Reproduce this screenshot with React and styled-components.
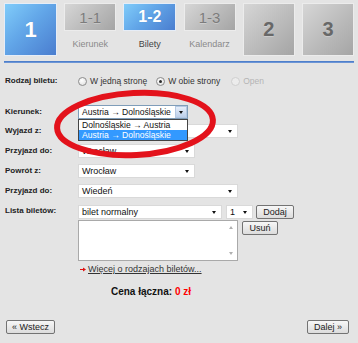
import React from 'react'
import styled, { createGlobalStyle } from 'styled-components'

const Global = createGlobalStyle`
  html, body { margin: 0; padding: 0; background: #e4e4e4; }
  body { font-family: "Liberation Sans", Arial, sans-serif; color: #222; }
`

const Page = styled.div`
  position: relative;
  width: 358px;
  height: 343px;
  padding: 3px 4px 0 4px;
  box-sizing: border-box;
`

const Steps = styled.div`
  display: flex;
  justify-content: space-between;
  align-items: flex-start;
`

const Tile = styled.div`
  width: ${p => p.w || 52}px;
  height: ${p => p.h || 53}px;
  box-sizing: border-box;
  display: flex;
  align-items: center;
  justify-content: center;
  border: 1px solid ${p => (p.active ? '#e6edf7' : '#ececec')};
  background: ${p =>
    p.active
      ? 'linear-gradient(135deg, #80ccfa 0%, #62a6e8 45%, #4a7dcf 100%)'
      : 'linear-gradient(135deg, #d6d6d6 0%, #bdbdbd 50%, #a5a5a5 100%)'};
  color: ${p => (p.active ? '#fff' : p.big ? '#686868' : '#7c7c7c')};
  font-size: ${p => p.size}px;
  font-weight: ${p => (p.active || p.big ? 'bold' : 'normal')};
  text-shadow: ${p => (p.active ? '0 0 1px rgba(0,0,0,.15)' : '0 1px 0 rgba(255,255,255,.25)')};
`

const Step = styled.div`
  width: ${p => p.w}px;
  display: flex;
  flex-direction: column;
`

const StepLabel = styled.div`
  margin-top: 7px;
  line-height: 12px;
  font-size: 9px;
  text-align: center;
  color: ${p => (p.current ? '#444' : '#8a8a8a')};
`

const Rule = styled.div`
  margin-top: 5px;
  height: 2px;
  background: linear-gradient(#3f74c6, #7ba0da);
`

const Form = styled.div`
  padding-left: 1px;
`

const Row = styled.div`
  display: grid;
  grid-template-columns: 73px 1fr;
  align-items: ${p => (p.top ? 'start' : 'center')};
  margin-top: ${p => p.mt}px;
  min-height: 14px;
`

const Label = styled.div`
  font-size: 8px;
  font-weight: bold;
  color: #222;
  line-height: 14px;
`

const Radios = styled.div`
  display: flex;
  align-items: center;
`

const RadioItem = styled.label`
  display: flex;
  align-items: center;
  font-size: 8.5px;
  color: ${p => (p.disabled ? '#b4b4b4' : '#333')};
  margin-right: ${p => p.mr || 0}px;
`

const RadioDot = styled.span`
  width: 9px;
  height: 9px;
  box-sizing: border-box;
  border-radius: 50%;
  border: 1px solid ${p => (p.disabled ? '#cfcfcf' : '#8c8c8c')};
  background: ${p => (p.disabled ? '#ececec' : 'radial-gradient(circle at 40% 35%, #fff, #dcdcdc)')};
  margin-right: 3px;
  display: flex;
  align-items: center;
  justify-content: center;
  &::after {
    content: '';
    width: 3px;
    height: 3px;
    border-radius: 50%;
    background: ${p => (p.checked ? '#2a2a2a' : 'transparent')};
  }
`

const SelectBox = styled.div`
  position: relative;
  width: ${p => p.w}px;
  height: 14px;
  box-sizing: border-box;
  background: #fff;
  border: 1px solid ${p => (p.focus ? '#7f9db9' : '#d9d9d9')};
  font-size: ${p => (p.focus ? 8.6 : 9)}px;
  line-height: 12px;
  padding-left: 3px;
  color: #111;
  white-space: nowrap;
  margin-left: ${p => p.ml || 0}px;
  margin-top: ${p => p.mt || 0}px;
  &::after {
    content: '';
    display: ${p => (p.focus ? 'none' : 'block')};
    position: absolute;
    right: 5px;
    top: 5px;
    border-left: 2.5px solid transparent;
    border-right: 2.5px solid transparent;
    border-top: 3px solid #111;
  }
`

const DropButton = styled.span`
  position: absolute;
  right: 0;
  top: 0;
  width: 12px;
  height: 12px;
  box-sizing: border-box;
  border: 1px solid #b4c8e2;
  background: linear-gradient(#e6eefa, #bccfe9);
  &::after {
    content: '';
    position: absolute;
    left: 2.5px;
    top: 4px;
    border-left: 2.5px solid transparent;
    border-right: 2.5px solid transparent;
    border-top: 3px solid #111;
  }
`

const DropList = styled.div`
  position: absolute;
  left: -1px;
  top: 13px;
  width: 110px;
  box-sizing: border-box;
  border: 1px solid #444;
  background: #fff;
  z-index: 5;
`

const DropItem = styled.div`
  font-size: 8.6px;
  line-height: 10px;
  padding-left: 3px;
  color: ${p => (p.selected ? '#fff' : '#111')};
  background: ${p => (p.selected ? '#3399ff' : 'transparent')};
`

const Cell = styled.div`
  display: flex;
  align-items: ${p => p.align || 'center'};
  gap: ${p => p.gap || 0}px;
  margin-top: ${p => p.mt || 0}px;
`

const Button = styled.button`
  width: ${p => p.w}px;
  height: 14px;
  box-sizing: border-box;
  padding: 0;
  margin: 0;
  margin-top: ${p => p.mt || 0}px;
  margin-left: ${p => p.ml || 0}px;
  border: 1px solid #737373;
  border-radius: 2px;
  background: linear-gradient(#f7f7f7, #dcdcdc);
  font-family: "Liberation Sans", Arial, sans-serif;
  font-size: 9px;
  line-height: 12px;
  color: #222;
`

const ListBox = styled.div`
  position: relative;
  width: 160px;
  height: 41px;
  box-sizing: border-box;
  background: #fff;
  border: 1px solid #a9a9a9;
`

const ScrollArrow = styled.span`
  position: absolute;
  right: 4px;
  ${p => (p.down ? 'bottom: 5px;' : 'top: 5px;')}
  border-left: 2.5px solid transparent;
  border-right: 2.5px solid transparent;
  ${p => (p.down ? 'border-top' : 'border-bottom')}: 3px solid #b0b0b0;
`

const MoreLink = styled.div`
  margin-top: 3px;
  font-size: 9px;
  line-height: 10px;
  color: #333;
  display: flex;
  align-items: center;
  padding-left: 2px;
  a {
    color: #333;
    text-decoration: underline;
  }
`

const RedArrow = styled.svg`
  margin-right: 2px;
  flex: none;
`

const Total = styled.div`
  margin-top: 12px;
  width: 292px;
  text-align: center;
  font-size: 10px;
  line-height: 12px;
  font-weight: bold;
  color: #111;
  span { color: #f00; }
`

const Footer = styled.div`
  display: flex;
  justify-content: space-between;
  margin-top: 22px;
  padding: 0 5px 0 1px;
`

const Ring = styled.svg`
  position: absolute;
  left: 50px;
  top: 86px;
  overflow: visible;
  z-index: 10;
  pointer-events: none;
`

export default function App() {
  return (
    <Page>
      <Global />
      <Steps>
        <Tile w={53} active big size={22}>1</Tile>
        <Step w={52}>
          <Tile w={52} h={28} size={15}>1-1</Tile>
          <StepLabel>Kierunek</StepLabel>
        </Step>
        <Step w={53}>
          <Tile w={53} h={28} active size={16}>1-2</Tile>
          <StepLabel current>Bilety</StepLabel>
        </Step>
        <Step w={52}>
          <Tile w={52} h={28} size={15}>1-3</Tile>
          <StepLabel>Kalendarz</StepLabel>
        </Step>
        <Tile w={52} big size={20}>2</Tile>
        <Tile w={52} big size={20}>3</Tile>
      </Steps>
      <Rule />

      <Form>
        <Row mt={11}>
          <Label>Rodzaj biletu:</Label>
          <Radios>
            <RadioItem mr={9}><RadioDot />W jedną stronę</RadioItem>
            <RadioItem mr={11}><RadioDot checked />W obie strony</RadioItem>
            <RadioItem disabled><RadioDot disabled />Open</RadioItem>
          </Radios>
        </Row>

        <Row mt={17}>
          <Label>Kierunek:</Label>
          <SelectBox w={110} focus>
            Austria → Dolnośląskie
            <DropButton />
            <DropList>
              <DropItem>Dolnośląskie → Austria</DropItem>
              <DropItem selected>Austria → Dolnośląskie</DropItem>
            </DropList>
          </SelectBox>
        </Row>

        <Row mt={5}>
          <Label>Wyjazd z:</Label>
          <SelectBox w={160} />
        </Row>
        <Row mt={6}>
          <Label>Przyjazd do:</Label>
          <SelectBox w={117}>Wrocław</SelectBox>
        </Row>
        <Row mt={6}>
          <Label>Powrót z:</Label>
          <SelectBox w={117}>Wrocław</SelectBox>
        </Row>
        <Row mt={6}>
          <Label>Przyjazd do:</Label>
          <SelectBox w={160}>Wiedeń</SelectBox>
        </Row>

        <Row mt={6} top>
          <Label>Lista biletów:</Label>
          <div>
            <Cell>
              <SelectBox w={144} mt={1}>bilet normalny</SelectBox>
              <SelectBox w={27} ml={4} mt={1}>1</SelectBox>
              <Button w={38} ml={3}>Dodaj</Button>
            </Cell>
            <Cell align="flex-start" gap={4} mt={1}>
              <ListBox>
                <ScrollArrow />
                <ScrollArrow down />
              </ListBox>
              <Button w={36} mt={1}>Usuń</Button>
            </Cell>
            <MoreLink>
              <RedArrow width="6" height="5" viewBox="0 0 6 5">
                <path d="M0 2.5H4.5" stroke="#e01010" strokeWidth="1" />
                <path d="M3 0.5L6 2.5L3 4.5Z" fill="#e01010" />
              </RedArrow>
              <a>Więcej o rodzajach biletów...</a>
            </MoreLink>
          </div>
        </Row>

        <Total>Cena łączna: <span>0 zł</span></Total>

        <Footer>
          <Button w={49}>« Wstecz</Button>
          <Button w={42}>Dalej »</Button>
        </Footer>
      </Form>

      <Ring width="175" height="80" viewBox="0 0 175 80">
        <ellipse cx="85" cy="38" rx="78" ry="31" fill="none" stroke="#e3121b" strokeWidth="6" transform="rotate(-3 85 38)" />
      </Ring>
    </Page>
  )
}
